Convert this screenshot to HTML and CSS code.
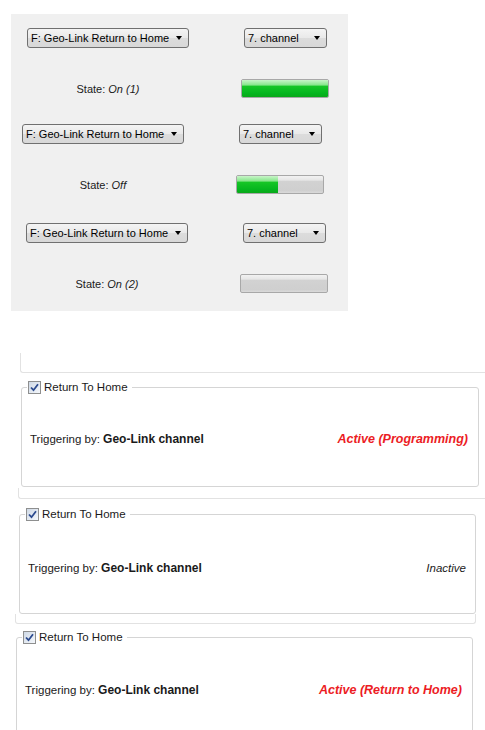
FILE: index.html
```html
<!DOCTYPE html>
<html lang="en">
<head>
  <meta charset="UTF-8" />
  <meta name="viewport" content="width=device-width, initial-scale=1.0" />
  <title>Geo-Link Return to Home</title>
  <link rel="stylesheet" href="styles.css">
</head>
<body>
  <div class="panel">
    <div class="block b1">
      <div class="combo wide"><span>F: Geo-Link Return to Home</span><i class="arrow"></i></div>
      <div class="combo narrow"><span>7. channel</span><i class="arrow"></i></div>
      <div class="state">State: <em>On (1)</em></div>
      <div class="bar"><div class="fill" style="width:100%"></div></div>
    </div>
    <div class="block b2">
      <div class="combo wide"><span>F: Geo-Link Return to Home</span><i class="arrow"></i></div>
      <div class="combo narrow"><span>7. channel</span><i class="arrow"></i></div>
      <div class="state">State: <em>Off</em></div>
      <div class="bar"><div class="fill" style="width:48%"></div></div>
    </div>
    <div class="block b3">
      <div class="combo wide"><span>F: Geo-Link Return to Home</span><i class="arrow"></i></div>
      <div class="combo narrow"><span>7. channel</span><i class="arrow"></i></div>
      <div class="state">State: <em>On (2)</em></div>
      <div class="bar"><div class="fill" style="width:0%"></div></div>
    </div>
  </div>

  <div class="shots">
    <div class="edge e1"></div>
    <fieldset class="group g1">
      <legend><span class="check"><svg width="11" height="11" viewBox="0 0 11 11"><path d="M2 5.5 L4.5 8.2 L9 2.2" fill="none" stroke="#2b4a8e" stroke-width="1.8"/></svg></span>Return To Home</legend>
      <div class="trigger">
        <span>Triggering by: <b>Geo-Link channel</b></span>
        <span class="status active">Active (Programming)</span>
      </div>
    </fieldset>

    <div class="edge e2"></div>
    <fieldset class="group g2">
      <legend><span class="check"><svg width="11" height="11" viewBox="0 0 11 11"><path d="M2 5.5 L4.5 8.2 L9 2.2" fill="none" stroke="#2b4a8e" stroke-width="1.8"/></svg></span>Return To Home</legend>
      <div class="trigger">
        <span>Triggering by: <b>Geo-Link channel</b></span>
        <span class="status">Inactive</span>
      </div>
    </fieldset>

    <div class="edge e3"></div>
    <fieldset class="group g3">
      <legend><span class="check"><svg width="11" height="11" viewBox="0 0 11 11"><path d="M2 5.5 L4.5 8.2 L9 2.2" fill="none" stroke="#2b4a8e" stroke-width="1.8"/></svg></span>Return To Home</legend>
      <div class="trigger">
        <span>Triggering by: <b>Geo-Link channel</b></span>
        <span class="status active">Active (Return to Home)</span>
      </div>
    </fieldset>
  </div>
</body>
</html>
```

FILE: styles.css
```css
body {
  margin: 0;
  background: #fff;
  font-family: 'Liberation Sans', Arial, sans-serif;
  color: #1a1a1a;
  overflow: hidden;
}
.panel {
  margin: 14px 0 0 11px;
  width: 337px;
  padding: 14px 0 18px;
  background: #f0f0f0;
}
.block {
  display: grid;
  grid-template-columns: 162px 88px;
  grid-template-rows: 20px 19px;
  column-gap: 52px;
  row-gap: 31px;
  align-items: center;
}
.b1 {
  margin: 0 0 26px 16px;
}
.b2 {
  margin: 0 0 29px 11px;
}
.b3 {
  margin: 0 0 0 15px;
}
.combo {
  height: 20px;
  box-sizing: border-box;
  display: flex;
  align-items: center;
  justify-content: space-between;
  padding: 0 6px 0 3px;
  border: 1px solid #707070;
  border-radius: 3px;
  background: linear-gradient(#f4f4f4, #e9e9e9 50%, #dcdcdc 51%, #d8d8d8);
  font-size: 11px;
  color: #000;
}
.narrow {
  width: 83px;
  margin-left: 3px;
}
.arrow {
  width: 0;
  height: 0;
  border-top: 4px solid #000;
  border-left: 3.5px solid transparent;
  border-right: 3.5px solid transparent;
}
.state {
  text-align: center;
  font-size: 11px;
}
.bar {
  height: 19px;
  box-sizing: border-box;
  border: 1px solid #a8a8a8;
  border-radius: 2px;
  background: linear-gradient(#f2f2f2, #e6e6e6 25%, #d2d2d2 30%, #cfcfcf 85%, #dadada);
  overflow: hidden;
}
.fill {
  height: 100%;
  background: linear-gradient(#c9f5c9, #86e68a 30%, #16c626 36%, #05b51f 80%, #0aa81a);
}
.edge {
  box-sizing: border-box;
  border-left: 1px solid #e2e2e2;
  border-bottom: 1px solid #e2e2e2;
  border-bottom-left-radius: 3px;
}
.e1 {
  margin: 42px 0 0 20px;
  height: 20px;
}
.e2 {
  margin: 1px 0 0 18px;
  height: 11px;
}
.e3 {
  margin: 0 9px 0 15px;
  height: 10px;
  border-right: 1px solid #e2e2e2;
  border-bottom-right-radius: 3px;
}
.group {
  box-sizing: border-box;
  border: 1px solid #d5d5d5;
  border-radius: 3px;
  font-size: 11.5px;
  min-width: 0;
}
.group legend {
  display: flex;
  align-items: center;
  gap: 3px;
  margin-left: -3px;
  padding: 0 4px 0 1px;
  line-height: 14px;
  font-size: 11.5px;
}
.g1 {
  margin: 7px 6px 0 21px;
  padding: 38px 10px 40px 8px;
}
.g2 {
  margin: 8px 9px 0 19px;
  padding: 40px 9px 38px 8px;
}
.g3 {
  margin: 6px 12px 0 16px;
  padding: 39px 10px 60px 8px;
}
.check {
  width: 13px;
  height: 13px;
  box-sizing: border-box;
  border: 1px solid #8e8f8f;
  background: linear-gradient(135deg, #cfd9e6, #f4f7fb);
  display: flex;
  align-items: center;
  justify-content: center;
}
.trigger {
  display: flex;
  justify-content: space-between;
  line-height: 14px;
}
.trigger b {
  font-weight: bold;
  font-size: 12px;
}
.status {
  font-style: italic;
}
.active {
  color: #ec1c24;
  font-weight: bold;
  font-size: 12.5px;
}
```
